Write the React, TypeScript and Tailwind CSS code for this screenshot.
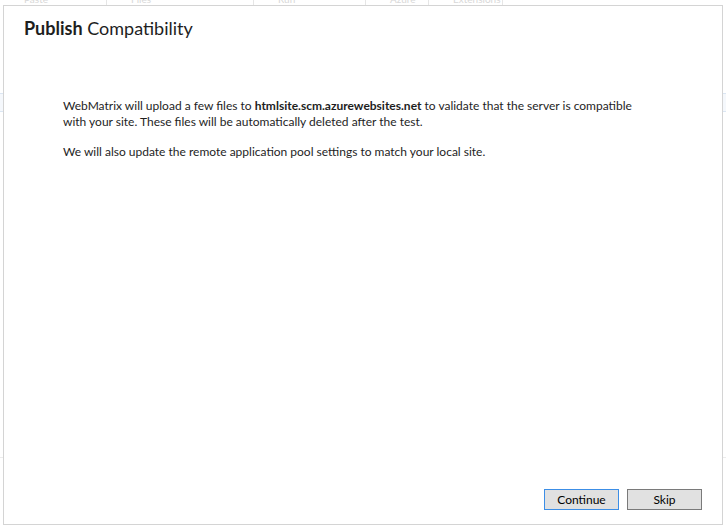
import * as React from "react";

const font = { fontFamily: 'Lato, "Noto Sans", sans-serif' };

const Toolbar = () => {
  const tabs = [
    { w: "w-[107px]", label: "Paste" },
    { w: "w-[147px]", label: "Files" },
    { w: "w-[112px]", label: "Run" },
    { w: "w-[63px]", label: "Azure" },
    { w: "w-[74px]", label: "Extensions" },
  ];
  return (
    <div className="flex h-[5px] overflow-hidden">
      {tabs.map((t) => (
        <div
          key={t.label}
          className={`${t.w} border-r border-[#e6e6e6] text-[10px] leading-none text-[#d8d8d8] -mt-[6px] pl-6`}
        >
          {t.label}
        </div>
      ))}
    </div>
  );
};

const Button = ({ children, focused }: { children: React.ReactNode; focused?: boolean }) => (
  <button
    className={`w-[75px] h-[21px] bg-[#e1e1e1] text-[12px] leading-none text-black border ${
      focused ? "border-[#3c8ee6]" : "border-[#7a7a7a]"
    }`}
  >
    {children}
  </button>
);

export default function App() {
  return (
    <div className="relative w-[726px] h-[527px] bg-white overflow-hidden" style={font}>
      {/* app window behind the dialog */}
      <Toolbar />
      <div className="mt-[88px] h-[19px] w-full border-y border-[#dbe6f3] bg-[#f5f8fc]" />
      <div className="mt-[345px] h-px w-full bg-[#ececec]" />

      {/* modal dialog */}
      <div className="absolute left-[3px] top-[5px] w-[720px] h-[520px] bg-white border border-[#d4d4d4] flex flex-col">
        <h1 className="pl-[20px] pt-[10px] text-[18px] leading-[24px] text-[#1e1e1e]">
          <span className="font-bold">Publish</span> Compatibility
        </h1>
        <div className="pl-[59px] pt-[58px] text-[12px] leading-[16px] text-[#1e1e1e]">
          <p>
            WebMatrix will upload a few files to{" "}
            <span className="font-bold">htmlsite.scm.azurewebsites.net</span> to validate that the server is compatible
            <br />
            with your site. These files will be automatically deleted after the test.
          </p>
          <p className="mt-[14px]">We will also update the remote application pool settings to match your local site.</p>
        </div>
        <div className="mt-auto flex justify-end gap-[8px] pr-[20px] pb-[14px]">
          <Button focused>Continue</Button>
          <Button>Skip</Button>
        </div>
      </div>
    </div>
  );
}
